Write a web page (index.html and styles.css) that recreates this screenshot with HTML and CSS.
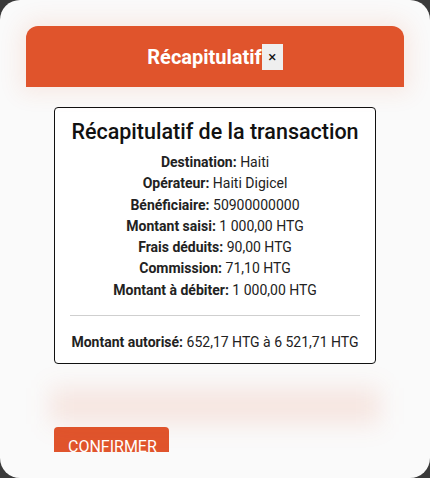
FILE: index.html
```html
<!DOCTYPE html>
<html lang="fr">
<head>
<meta charset="utf-8">
<title>Récapitulatif</title>
<link rel="stylesheet" href="styles.css">
</head>
<body>
<div class="dialog">
  <div class="dialog-header">
    <h2 class="dialog-title">Récapitulatif</h2>
    <button class="close-btn" type="button">×</button>
  </div>
  <div class="dialog-body">
    <div class="summary">
      <h3 class="summary-title">Récapitulatif de la transaction</h3>
      <div class="summary-lines">
        <p><b>Destination:</b> Haiti</p>
        <p><b>Opérateur:</b> Haiti Digicel</p>
        <p><b>Bénéficiaire:</b> 50900000000</p>
        <p><b>Montant saisi:</b> 1 000,00 HTG</p>
        <p><b>Frais déduits:</b> 90,00 HTG</p>
        <p><b>Commission:</b> 71,10 HTG</p>
        <p><b>Montant à débiter:</b> 1 000,00 HTG</p>
      </div>
      <hr class="divider">
      <p class="authorized"><b>Montant autorisé:</b> 652,17 HTG à 6 521,71 HTG</p>
    </div>
    <div class="blurred"></div>
    <button class="confirm-btn" type="button">Confirmer</button>
  </div>
</div>
</body>
</html>
```

FILE: styles.css
```css
html, body {
  margin: 0;
  padding: 0;
}
body {
  background: #3a3a3a;
  font-family: Roboto, "Liberation Sans", sans-serif;
  width: 430px;
  height: 478px;
  overflow: hidden;
}
.dialog {
  width: 430px;
  height: 478px;
  box-sizing: border-box;
  background: #fafafa;
  border-radius: 20px;
  padding: 26px 26px 0;
  overflow: hidden;
}
.dialog-header {
  height: 61px;
  background: #e0542c;
  border-radius: 12px 12px 0 0;
  display: flex;
  align-items: center;
  justify-content: center;
  box-shadow: 0 0 22px 6px rgba(224, 84, 44, 0.10);
  position: relative;
  z-index: 1;
}
.dialog-title {
  margin: 0;
  font-size: 20px;
  font-weight: 700;
  color: #fff;
  line-height: 24px;
}
.close-btn {
  width: 21px;
  height: 26px;
  padding: 0;
  border: none;
  background: #efefef;
  color: #111;
  font-family: Roboto, "Liberation Sans", sans-serif;
  font-size: 15px;
  line-height: 26px;
  margin-top: 1px;
}
.dialog-body {
  height: 365px;
  overflow: hidden;
  padding: 20px 28px 0;
  box-sizing: border-box;
}
.summary {
  background: #fff;
  border: 1px solid #111;
  border-radius: 4px;
  padding: 11px 15px 10px;
  text-align: center;
  color: #222;
}
.summary-title {
  margin: 0;
  font-size: 21.5px;
  font-weight: 500;
  line-height: 25px;
  color: #111;
}
.summary-lines {
  margin-top: 8px;
}
.summary-lines p,
.authorized {
  margin: 0;
  font-size: 14px;
  line-height: 21.3px;
}
b {
  font-weight: 700;
}
.divider {
  border: none;
  border-top: 1px solid #cfcfcf;
  margin: 14px 0 16px;
}
.blurred {
  height: 36px;
  margin: 24px -4px 0;
  background: rgba(224, 84, 44, 0.12);
  filter: blur(12px);
}
.confirm-btn {
  display: block;
  margin-top: 3px;
  width: 115px;
  height: 36px;
  border: none;
  border-radius: 4px;
  background: #e0542c;
  color: #fff;
  font-family: Roboto, "Liberation Sans", sans-serif;
  font-size: 16px;
  text-transform: uppercase;
  text-align: left;
  padding: 3px 0 0 14px;
  line-height: 30px;
}
```
